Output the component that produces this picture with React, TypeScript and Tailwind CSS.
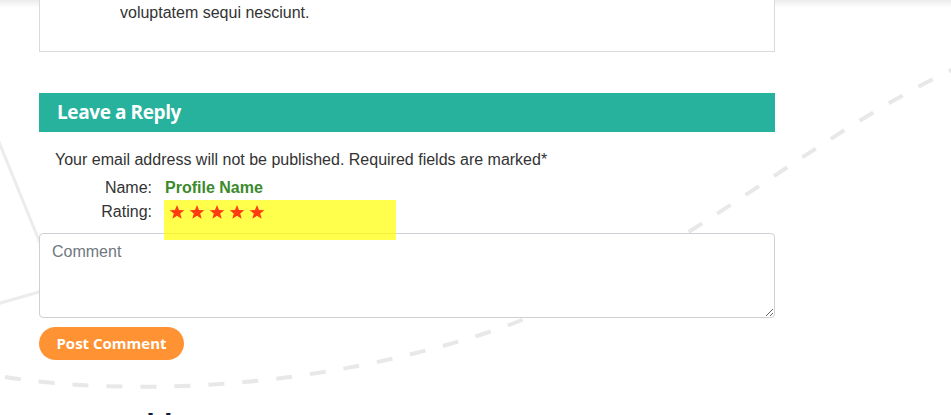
import React from 'react';

const Star = () => (
  <svg viewBox="0 0 24 24" className="w-[16px] h-[16px]">
    <polygon points="12,1.5 15,9 23,9.3 16.8,14.3 19,22.3 12,17.7 5,22.3 7.2,14.3 1,9.3 9,9" fill="#ff3b12" />
  </svg>
);

const Background = () => (
  <svg className="absolute inset-0 w-full h-full" viewBox="0 0 951 415" preserveAspectRatio="none">
    <line x1="-12" y1="115" x2="60" y2="292" stroke="#ececec" strokeWidth="3" />
    <line x1="60" y1="286" x2="-10" y2="306" stroke="#ececec" strokeWidth="3" />
    <path
      d="M 5 377 C 120 395, 300 392, 480 335 S 800 140, 960 66"
      fill="none"
      stroke="#e8e8e8"
      strokeWidth="4"
      strokeDasharray="16 18"
    />
  </svg>
);

export default function App() {
  return (
    <div className="relative h-[415px] overflow-hidden bg-white font-['Liberation_Sans',Arial,sans-serif] text-[#333]">
      <Background />
      <div className="absolute top-0 left-0 right-0 h-[8px] bg-gradient-to-b from-[#ececec] to-transparent" />

      <div className="relative w-[775px] pl-[39px]">
        <div className="h-[52px] bg-white border-x border-b border-[#d9d9e0] pl-[80px] pt-[4px] text-[16px] leading-[18px]">
          voluptatem sequi nesciunt.
        </div>

        <div className="mt-[41px] h-[39px] bg-[#26b29d] flex items-center pl-[18px]">
          <h3 className="text-white text-[19px] font-bold font-['Open_Sans',sans-serif] tracking-[-0.4px]">
            Leave a Reply
          </h3>
        </div>

        <p className="mt-[16px] pl-[16px] text-[16px] leading-[24px]">
          Your email address will not be published. Required fields are marked*
        </p>

        <div className="mt-[4px] flex text-[16px] leading-[24px]">
          <span className="w-[113px] text-right">Name:</span>
          <span className="ml-[13px] font-bold text-[#3b8a2c]">Profile Name</span>
        </div>

        <div className="relative flex text-[16px] leading-[24px]">
          <span className="w-[113px] text-right">Rating:</span>
          <div className="absolute left-[125px] top-0 w-[232px] h-[40px] bg-[#ffff00]/70 z-10" />
          <div className="relative z-20 ml-[17px] flex items-center gap-[4px]">
            <Star />
            <Star />
            <Star />
            <Star />
            <Star />
          </div>
        </div>

        <textarea
          placeholder="Comment"
          className="mt-[9px] block w-full h-[85px] bg-white border border-[#cdd0d4] rounded-[4px] px-[12px] py-[7px] text-[16px] leading-[22px] placeholder:text-[#6f7780] outline-none"
        />

        <button className="mt-[9px] h-[33px] w-[145px] rounded-full bg-[#ff9232] text-white text-[15px] font-bold font-['Open_Sans',sans-serif]">
          Post Comment
        </button>

        <h2 className="mt-[44px] pl-[26px] text-[28px] leading-[40px] font-bold text-[#0d1b3e] font-['Open_Sans',sans-serif]">
          more blog posts
        </h2>
      </div>
    </div>
  );
}
